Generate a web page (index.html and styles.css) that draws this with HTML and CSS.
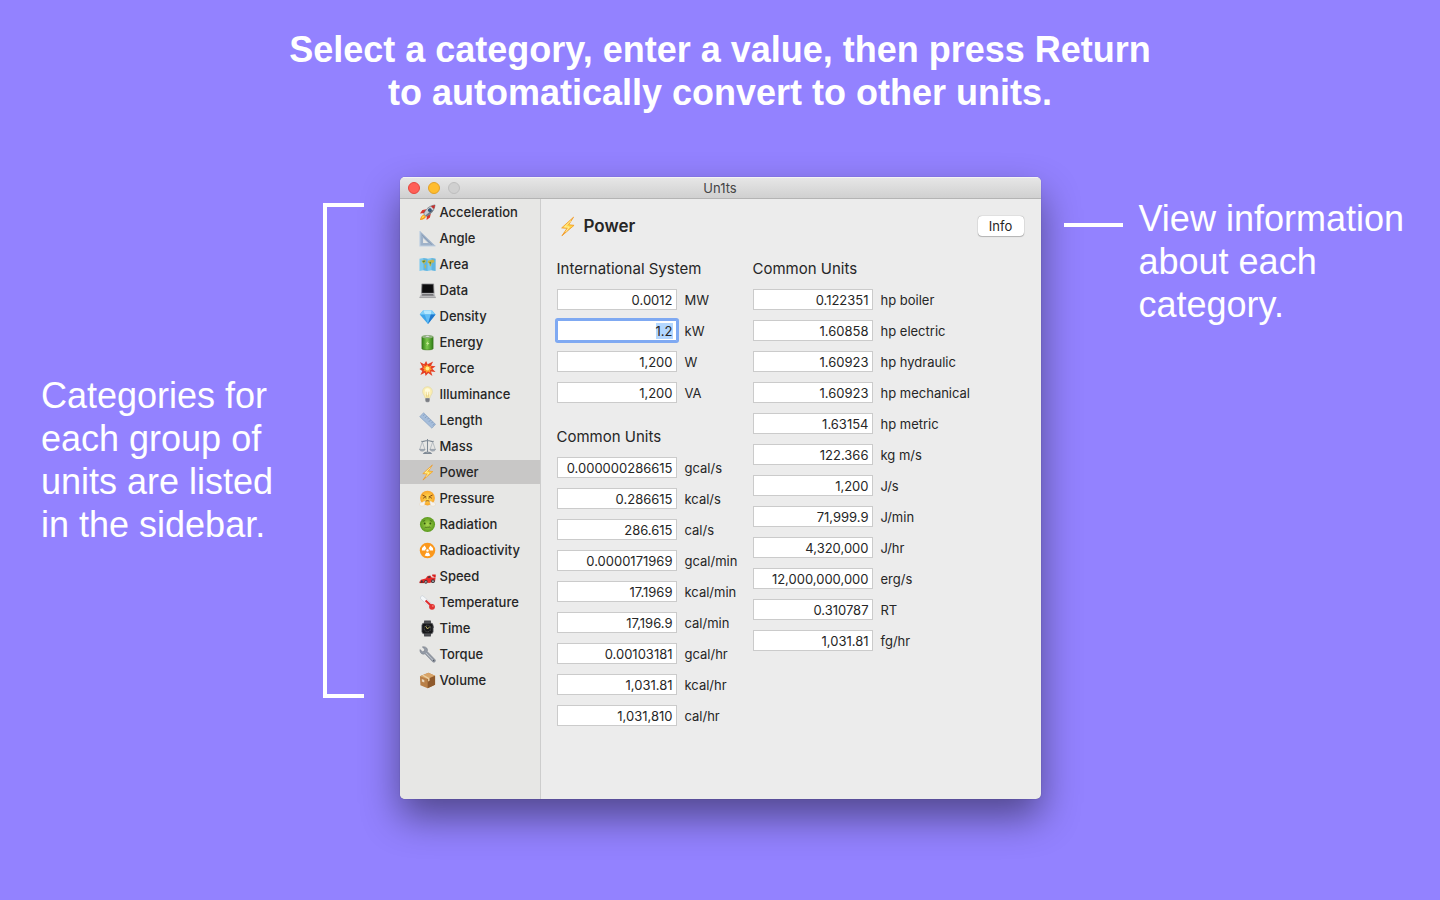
FILE: index.html
```html
<!DOCTYPE html>
<html lang="en">
<head>
<meta charset="utf-8">
<title>Un1ts</title>
<meta name="viewport" content="width=device-width, initial-scale=1">
<link rel="stylesheet" href="styles.css">
</head>
<body>
<svg class="defs" aria-hidden="true">
  <defs>
    <linearGradient id="g-bolt" x1="0" y1="0" x2="0" y2="1"><stop offset="0" stop-color="#ffb52e"/><stop offset=".5" stop-color="#ffd84a"/><stop offset="1" stop-color="#f7931e"/></linearGradient>
    <radialGradient id="g-green"><stop offset="0" stop-color="#a9d64e"/><stop offset="1" stop-color="#5b9a1e"/></radialGradient>
    <radialGradient id="g-face"><stop offset="0" stop-color="#ffdf55"/><stop offset="1" stop-color="#f9a52b"/></radialGradient>
    <linearGradient id="g-can"><stop offset="0" stop-color="#2f7d16"/><stop offset=".45" stop-color="#7cc94b"/><stop offset="1" stop-color="#2f7d16"/></linearGradient>
  </defs>
  <symbol id="i-bolt" viewBox="0 0 18 18"><path d="M14.2 1 4 10.2l4.600.4L4.200 17 14.600 8l-4.600-.5z" fill="url(#g-bolt)" stroke="#f09a26" stroke-width=".7" stroke-linejoin="round"/><path d="m12 4-5.500 5.300 4 .2L7.400 13.600" fill="none" stroke="#fff3a8" stroke-width=".8"/></symbol>
  <symbol id="i-rocket" viewBox="0 0 18 18"><path d="M1 17c.4-3 1.600-5 4-6l2.500 2.500C6.500 15.600 4.500 16.800 1 17z" fill="#f7941d"/><path d="M2.500 15.500c.3-1.600 1-2.700 2.500-3.400l1 1c-.8 1.500-2 2.200-3.500 2.400z" fill="#ffe04a"/><path d="M8 5.500 3.600 6.400 1 10l4.500-.4zM12.500 10l-.9 4.400L8 17l.4-4.500z" fill="#d9362c"/><path d="M5 10.500C7 5.500 11 1.600 17 1c-.6 6-4.500 10-9.500 12z" fill="#c6ced6" stroke="#59636e" stroke-width=".6"/><path d="M12.600 2.400C14 1.600 15.400 1.200 17 1c-.2 1.600-.6 3-1.400 4.400z" fill="#c52e2a"/><path d="m7 12 6.500-5.500L15.400 6C14 9 11 11.600 7.500 13z" fill="#727b86"/><circle cx="11.500" cy="6.500" r="1.700" fill="#2e5e94" stroke="#39414a" stroke-width=".6"/></symbol>
  <symbol id="i-angle" viewBox="0 0 18 18"><path d="M1 1v16h16.500zm3.300 7.500 5.500 5.300H4.300z" fill="#9fb2c9" fill-rule="evenodd"/><path d="M1 1v16h16.500" fill="none" stroke="#bfd0e2" stroke-width="1.200"/><path d="m3 5 10.500 10.400" stroke="#7f93ac" stroke-width=".8"/></symbol>
  <symbol id="i-map" viewBox="0 0 18 18"><path d="m.5 3 4.200-1L9 3l4.300-1 4.200 1v13l-4.200-1L9 16l-4.300-1-4.200 1z" fill="#7cc9ee"/><path d="M4.700 2v13L9 16V3zM13.300 2v13l4.200 1V3z" fill="#4fa6d6" opacity=".6"/><path d="m2.500 5 4-1 1.200 1.500L6 7.500l-.5 1-1.500-1zM6 9l1.700 1-1 3.500-.8-1zM9.500 5l5.500-1.200 1.500 1.700-1.500 2-1.500-.5L12.500 11l-1.200-.6-.6-2.600-1.500-.6z" fill="#c9b548"/><path d="m3.500 5.200 2.500-.5.300 1.500-1.800.8zM10.800 6.500l2-.5-.6 3.200z" fill="#4f8a3d"/></symbol>
  <symbol id="i-laptop" viewBox="0 0 18 18"><path d="M3 2h12.500l.5 10H2.500z" fill="#2e2e30" stroke="#8b8b8e" stroke-width=".7"/><path d="m4 3 10.500.1.300 7.900H3.700z" fill="#0c0c0d"/><path d="M2.500 12h13.600l1.700 4.200H.5z" fill="#b9b9bb"/><path d="M3.500 12.600h11.400l.8 1.900H2.800z" fill="#77777a"/><path d="M.5 16.200h17.300v.8H.5z" fill="#8b8b8e"/></symbol>
  <symbol id="i-gem" viewBox="0 0 18 18"><path d="M4.500 2.500h9L17.500 7 9.500 17 .8 7z" fill="#3da4ea"/><path d="M4.500 2.500 6 7H.8zM13.500 2.500 12.500 7h5z" fill="#7fd0fa"/><path d="M4.500 2.500h9l-1 4.500H6z" fill="#b4e7ff"/><path d="M6 7h6.500l-3 10z" fill="#61bdf6"/><path d="M12.500 7h5l-8 10z" fill="#2077cc"/></symbol>
  <symbol id="i-battery" viewBox="0 0 18 18"><path d="M3 3c0-1.600 12-1.600 12 0v12.500c0 1.800-12 1.800-12 0z" fill="url(#g-can)" stroke="#39701f" stroke-width=".5"/><ellipse cx="9" cy="3" rx="5.800" ry="1.600" fill="#8fb37c"/><ellipse cx="9" cy="2.400" rx="2.200" ry=".9" fill="#e6e8e3" stroke="#70826a" stroke-width=".3"/><path d="m10.300 6.800-3 3.400 1.900.2L8 13l3-3.400-1.900-.3z" fill="#d4f0a0"/></symbol>
  <symbol id="i-boom" viewBox="0 0 18 18"><path d="m1 2 4.500 2.500L7.500 1l1.600 3.500L15 1.500 12.700 6l4.800.5L14 9.200l3.500 3.500-4.800-.5 1.500 4.800-4.400-3.200L7 17l-.8-3.600L1.500 16l2-4.300L.5 9.500l3.300-1.700z" fill="#e43e25"/><path d="m4 5 3 1.500L9 4.600l1 2.200 3.300-.8L12 8.500l2 1.300-2.300 1 .4 2.700-2.500-1.400-2 1.700-.6-2.300-2.400.3L5.700 10 4 8.500l2-.7z" fill="#ff9a2b"/><circle cx="9" cy="9" r="2" fill="#ffef87"/></symbol>
  <symbol id="i-bulb" viewBox="0 0 18 18"><path d="M9 .8c3.300 0 5.200 2.400 5.200 5.100 0 2.800-2.400 4.200-2.700 6.900h-5C6.200 10.100 3.800 8.700 3.800 5.900 3.800 3.200 5.700.8 9 .8z" fill="#fbeeb0" stroke="#ddd3a0" stroke-width=".6"/><ellipse cx="9" cy="6" rx="2.800" ry="3.500" fill="#fffbdc"/><path d="m7.500 6 .8 6m2.200-6-.8 6" stroke="#d8b65a" stroke-width=".5"/><path d="M6.800 12.800h4.400v3.300L10 17.300H8l-1.200-1.200z" fill="#8d9096"/><path d="M6.800 14.200h4.400M7 15.700h4" stroke="#55585e" stroke-width=".5"/></symbol>
  <symbol id="i-ruler" viewBox="0 0 18 18"><path d="M4.800.8 17.500 13l-3.800 4.200L.8 5z" fill="#a5bdda" stroke="#7e9abd" stroke-width=".6"/><path d="m5.800 2.500-1.300 1.500M8 4.600 6.200 6.500m4-.2L9 7.700m3.300.7-1.900 2m4.100 0-1.300 1.400m3.200.6-1.700 1.900" stroke="#6d87a8" stroke-width=".6"/></symbol>
  <symbol id="i-scale" viewBox="0 0 18 18"><path d="M9 1v14M2.500 3.500C5 4.300 7 2.300 9 2.700c2-.4 4 1.600 6.500.8M5 16.300c1-1.800 7-1.800 8 0z" fill="none" stroke="#7e8994" stroke-width="1.100"/><path d="m3.500 4-2.700 8m2.700-8 2.700 8M14.500 4l-2.700 8m2.700-8 2.700 8" stroke="#929ca6" stroke-width=".6"/><path d="M.5 12h6c-.5 2.600-5.500 2.600-6 0zM11.500 12h6c-.5 2.600-5.500 2.600-6 0z" fill="#a6b0ba" stroke="#6f7a85" stroke-width=".4"/></symbol>
  <symbol id="i-huff" viewBox="0 0 18 18"><circle cx="9" cy="8.500" r="7.800" fill="url(#g-face)"/><path d="M4 5.500 7.500 7.300M14 5.500l-3.500 1.800" stroke="#7a4310" stroke-width="1" stroke-linecap="round"/><path d="M4.500 8.700c1-1 2-1 3 0m3 0c1-1 2-1 3 0M6.700 12.200c1.500-1.300 3-1.300 4.600 0" fill="none" stroke="#7a4310" stroke-width=".9" stroke-linecap="round"/><path d="M7 11.700c-2.500 0-3 1.500-4.200 1.500-1.500 0-2.800 1.200-2.200 2.600.7 1.600 4 1.800 5 .4.900-1.200.2-2.500 1.400-4.500zM11 11.700c2.500 0 3 1.500 4.200 1.500 1.500 0 2.800 1.200 2.200 2.600-.7 1.600-4 1.800-5 .4-.9-1.200-.2-2.500-1.400-4.500z" fill="#f6f3ee" stroke="#d9cbb6" stroke-width=".4"/></symbol>
  <symbol id="i-sick" viewBox="0 0 18 18"><circle cx="9" cy="9" r="8" fill="url(#g-green)"/><path d="M4 5.500c1 0 1.800-.3 2.600-1M14 5.500c-1 0-1.800-.3-2.600-1M6 12.500c1-1.200 1.500.3 2.200-.5s1 .8 1.800 0 1.200-.7 2 .5" fill="none" stroke="#34550d" stroke-width=".7"/><circle cx="6" cy="8" r="1" fill="#34550d"/><circle cx="12" cy="8" r="1" fill="#34550d"/></symbol>
  <symbol id="i-radio" viewBox="0 0 18 18"><circle cx="9" cy="9" r="8.200" fill="#fb981c"/><circle cx="9" cy="9" r="1.300" fill="#fff"/><path d="M10.200 11.100 12 14.200a6 6 0 0 1-6 0l1.800-3.100a2.400 2.400 0 0 0 2.400 0zM6.600 9H3a6 6 0 0 1 3-5.200l1.800 3.100A2.400 2.400 0 0 0 6.600 9zM11.400 9H15a6 6 0 0 0-3-5.200l-1.800 3.100A2.400 2.400 0 0 1 11.400 9z" fill="#fff"/></symbol>
  <symbol id="i-race" viewBox="0 0 18 18"><path d="M14 7h3.700v3h-2l-.5-1.200H14z" fill="#d9221f"/><path d="M.6 14.500 2 12.500l5-1.500 2-2.500 3-.5 1.500 2 4 .5-.5 3.500-6 2z" fill="#e62a28"/><path d="m9 10.300 1.200-1.600h1.500l.5 1.600z" fill="#363b44"/><path d="M.5 14.500h5v1.500h-5z" fill="#b21a17"/><ellipse cx="7.300" cy="14.600" rx="1.800" ry="2" fill="#38393d"/><circle cx="7.300" cy="14.600" r=".9" fill="#b5b6ba"/><ellipse cx="14.800" cy="13.900" rx="1.900" ry="2.100" fill="#38393d"/><circle cx="14.800" cy="13.900" r=".9" fill="#b5b6ba"/><ellipse cx="3" cy="14.300" rx=".9" ry="1.300" fill="#38393d"/></symbol>
  <symbol id="i-thermo" viewBox="0 0 18 18"><path d="M3.500 4 13.500 13" stroke="#c2cbd4" stroke-width="4.400" stroke-linecap="round"/><path d="M3.500 4 13.500 13" stroke="#f4f7f9" stroke-width="3.400" stroke-linecap="round"/><path d="m7 7 6.500 6" stroke="#df2e2e" stroke-width="2.200"/><circle cx="13.800" cy="13.600" r="3.100" fill="#e13331"/><circle cx="14.700" cy="12.700" r=".8" fill="#ff9c93"/></symbol>
  <symbol id="i-watch" viewBox="0 0 18 18"><path d="M5.500.5h7l.5 4H5zM5 13.500h8l-.5 4h-7z" fill="#47484c"/><rect x="3" y="3.300" width="12" height="11.400" rx="2.500" fill="#17181a" stroke="#717276" stroke-width=".7"/><circle cx="9" cy="9" r="3.500" fill="none" stroke="#77797d" stroke-width=".7" stroke-dasharray="1 .8"/><path d="M7 6.500 9 9.500l2.500-2.500" fill="none" stroke="#f0e27a" stroke-width=".8"/><path d="M15 6.500h.8v2H15z" fill="#55565a"/></symbol>
  <symbol id="i-wrench" viewBox="0 0 18 18"><path d="M1 3.800 3.700 6l2-.6.300-2L3.500 1c2.200-.8 4.800.3 5.400 2.400.2.900.1 1.700-.2 2.400l8.200 8.500c1.500 1.700-.7 3.900-2.500 2.400L6.300 8.300C3.800 9.600.6 7.500 1 3.800z" fill="#949ba6" stroke="#6b727d" stroke-width=".5"/><path d="m7.500 7.500 7.500 7.800" stroke="#c7ccd3" stroke-width=".9"/><circle cx="15.500" cy="15.400" r=".8" fill="#565c66"/></symbol>
  <symbol id="i-box" viewBox="0 0 18 18"><path d="M1 4.500 10 .8l7 3.200v9.500L9.200 17.300 1.500 14z" fill="#b98048"/><path d="M1 4.500 10 .8 17 4 9.200 7.500z" fill="#d8a468"/><path d="M9.200 7.500 17 4v9.500l-7.800 3.800z" fill="#8e592c"/><path d="m4.700 3 6.500 3.600v2.600l-1.600.8V7.300L3.400 3.600z" fill="#ecd1a3"/><path d="m3 7.500 2.600 1v2.600L3 10z" fill="#ead9bf"/></symbol>
</svg>

<h1 class="headline">Select a category, enter a value, then press Return<br>to automatically convert to other units.</h1>

<main class="stage">
  <aside class="note note-left">
    <p class="note-text">Categories for<br>each group of<br>units are listed<br>in the sidebar.</p>
    <div class="bracket"></div>
  </aside>

  <section class="window" aria-label="Un1ts">
    <header class="titlebar">
      <div class="lights">
        <button class="light close" aria-label="Close"></button>
        <button class="light minimize" aria-label="Minimize"></button>
        <button class="light zoom" aria-label="Zoom" disabled></button>
      </div>
      <span class="window-title">Un1ts</span>
    </header>
    <div class="window-body">
      <nav class="sidebar" aria-label="Categories">
        <a class="item" href="#acceleration"><svg class="icon"><use href="#i-rocket"/></svg>Acceleration</a>
        <a class="item" href="#angle"><svg class="icon"><use href="#i-angle"/></svg>Angle</a>
        <a class="item" href="#area"><svg class="icon"><use href="#i-map"/></svg>Area</a>
        <a class="item" href="#data"><svg class="icon"><use href="#i-laptop"/></svg>Data</a>
        <a class="item" href="#density"><svg class="icon"><use href="#i-gem"/></svg>Density</a>
        <a class="item" href="#energy"><svg class="icon"><use href="#i-battery"/></svg>Energy</a>
        <a class="item" href="#force"><svg class="icon"><use href="#i-boom"/></svg>Force</a>
        <a class="item" href="#illuminance"><svg class="icon"><use href="#i-bulb"/></svg>Illuminance</a>
        <a class="item" href="#length"><svg class="icon"><use href="#i-ruler"/></svg>Length</a>
        <a class="item" href="#mass"><svg class="icon"><use href="#i-scale"/></svg>Mass</a>
        <a class="item selected" href="#power" aria-current="page"><svg class="icon"><use href="#i-bolt"/></svg>Power</a>
        <a class="item" href="#pressure"><svg class="icon"><use href="#i-huff"/></svg>Pressure</a>
        <a class="item" href="#radiation"><svg class="icon"><use href="#i-sick"/></svg>Radiation</a>
        <a class="item" href="#radioactivity"><svg class="icon"><use href="#i-radio"/></svg>Radioactivity</a>
        <a class="item" href="#speed"><svg class="icon"><use href="#i-race"/></svg>Speed</a>
        <a class="item" href="#temperature"><svg class="icon"><use href="#i-thermo"/></svg>Temperature</a>
        <a class="item" href="#time"><svg class="icon"><use href="#i-watch"/></svg>Time</a>
        <a class="item" href="#torque"><svg class="icon"><use href="#i-wrench"/></svg>Torque</a>
        <a class="item" href="#volume"><svg class="icon"><use href="#i-box"/></svg>Volume</a>
      </nav>
      <div class="content">
        <div class="content-head">
          <h2 class="category"><svg class="category-icon"><use href="#i-bolt"/></svg>Power</h2>
          <button class="info">Info</button>
        </div>
        <div class="columns">
          <div class="column">
            <section class="group">
              <h3 class="group-title">International System</h3>
              <div class="fields">
                <div class="field"><input class="value" id="mw" value="0.0012"><label for="mw">MW</label></div>
                <div class="field"><input class="value" id="kw" value="1.2" autofocus><label for="kw">kW</label></div>
                <div class="field"><input class="value" id="w" value="1,200"><label for="w">W</label></div>
                <div class="field"><input class="value" id="va" value="1,200"><label for="va">VA</label></div>
              </div>
            </section>
            <section class="group">
              <h3 class="group-title">Common Units</h3>
              <div class="fields">
                <div class="field"><input class="value" id="gcals" value="0.000000286615"><label for="gcals">gcal/s</label></div>
                <div class="field"><input class="value" id="kcals" value="0.286615"><label for="kcals">kcal/s</label></div>
                <div class="field"><input class="value" id="cals" value="286.615"><label for="cals">cal/s</label></div>
                <div class="field"><input class="value" id="gcalmin" value="0.0000171969"><label for="gcalmin">gcal/min</label></div>
                <div class="field"><input class="value" id="kcalmin" value="17.1969"><label for="kcalmin">kcal/min</label></div>
                <div class="field"><input class="value" id="calmin" value="17,196.9"><label for="calmin">cal/min</label></div>
                <div class="field"><input class="value" id="gcalhr" value="0.00103181"><label for="gcalhr">gcal/hr</label></div>
                <div class="field"><input class="value" id="kcalhr" value="1,031.81"><label for="kcalhr">kcal/hr</label></div>
                <div class="field"><input class="value" id="calhr" value="1,031,810"><label for="calhr">cal/hr</label></div>
              </div>
            </section>
          </div>
          <div class="column">
            <section class="group">
              <h3 class="group-title">Common Units</h3>
              <div class="fields">
                <div class="field"><input class="value" id="hpb" value="0.122351"><label for="hpb">hp boiler</label></div>
                <div class="field"><input class="value" id="hpe" value="1.60858"><label for="hpe">hp electric</label></div>
                <div class="field"><input class="value" id="hph" value="1.60923"><label for="hph">hp hydraulic</label></div>
                <div class="field"><input class="value" id="hpm" value="1.60923"><label for="hpm">hp mechanical</label></div>
                <div class="field"><input class="value" id="hpmetric" value="1.63154"><label for="hpmetric">hp metric</label></div>
                <div class="field"><input class="value" id="kgms" value="122.366"><label for="kgms">kg m/s</label></div>
                <div class="field"><input class="value" id="js" value="1,200"><label for="js">J/s</label></div>
                <div class="field"><input class="value" id="jmin" value="71,999.9"><label for="jmin">J/min</label></div>
                <div class="field"><input class="value" id="jhr" value="4,320,000"><label for="jhr">J/hr</label></div>
                <div class="field"><input class="value" id="ergs" value="12,000,000,000"><label for="ergs">erg/s</label></div>
                <div class="field"><input class="value" id="rt" value="0.310787"><label for="rt">RT</label></div>
                <div class="field"><input class="value" id="fghr" value="1,031.81"><label for="fghr">fg/hr</label></div>
              </div>
            </section>
          </div>
        </div>
      </div>
    </div>
  </section>

  <aside class="note note-right">
    <div class="pointer"></div>
    <p class="note-text">View information<br>about each<br>category.</p>
  </aside>
</main>
<script src="app.js"></script>
</body>
</html>
```
FILE: styles.css
```css
* {
  box-sizing: border-box;
}

body {
  margin: 0;
  min-height: 100vh;
  padding: 28px 0;
  background: #9382ff;
  color: #fff;
  font-family: "Liberation Sans", Helvetica, Arial, sans-serif;
}

.defs {
  position: absolute;
  width: 0;
  height: 0;
}

.headline {
  margin: 0 0 63px;
  font-size: 36px;
  line-height: 43px;
  font-weight: 700;
  text-align: center;
}

.stage {
  display: grid;
  grid-template-columns: 1fr 641px 1fr;
  align-items: start;
}

.note {
  display: flex;
  white-space: nowrap;
}

.note-text {
  margin: 0;
  font-size: 36px;
  line-height: 43px;
}

.note-left {
  justify-content: space-between;
  padding: 26px 36px 0 41px;
}

.note-left .note-text {
  padding-top: 171px;
}

.bracket {
  width: 41px;
  height: 495px;
  border: 4px solid #fff;
  border-right: 0;
}

.note-right {
  gap: 16px;
  padding: 20px 0 0 23px;
}

.pointer {
  width: 59px;
  height: 4px;
  margin-top: 26px;
  background: #fff;
}

.window {
  overflow: hidden;
  border-radius: 5px;
  background: #ececec;
  color: #262626;
  font-family: Inter, "Noto Sans", sans-serif;
  font-size: 13px;
  line-height: 16px;
  box-shadow: 0 0 1px rgba(0, 0, 0, 0.4), 0 18px 38px rgba(0, 0, 0, 0.45);
}

.titlebar {
  display: grid;
  grid-template-columns: 1fr auto 1fr;
  align-items: center;
  height: 22px;
  padding: 0 8px;
  border-top: 1px solid #f4f4f4;
  border-bottom: 1px solid #b4b4b4;
  background: linear-gradient(#e6e6e6, #d0d0d0);
}

.lights {
  display: flex;
  gap: 8px;
}

.light {
  width: 12px;
  height: 12px;
  padding: 0;
  border: 1px solid;
  border-radius: 50%;
}

.close {
  border-color: #e2463f;
  background: #ff5f57;
}

.minimize {
  border-color: #e0a028;
  background: #ffbd2e;
}

.zoom {
  border-color: #bebebe;
  background: #d0d0d0;
}

.window-title {
  color: #444;
}

.window-body {
  display: grid;
  grid-template-columns: 141px 1fr;
  min-height: 600px;
}

.sidebar {
  display: flex;
  flex-direction: column;
  gap: 2px;
  padding-top: 1px;
  border-right: 1px solid #cdcdcd;
  background: #e7e7e5;
}

.item {
  display: flex;
  align-items: center;
  gap: 4px;
  height: 24px;
  padding-left: 19px;
  color: #262626;
  font-weight: 500;
  text-decoration: none;
}

.item.selected {
  background: #c8c7c6;
}

.icon {
  width: 17px;
  height: 17px;
}

.content {
  padding: 16px;
}

.content-head {
  display: flex;
  align-items: center;
  justify-content: space-between;
  height: 22px;
  margin-bottom: 23px;
}

.category {
  display: flex;
  align-items: center;
  gap: 6px;
  margin: 0;
  font-size: 17px;
  line-height: 22px;
  font-weight: 600;
}

.category-icon {
  width: 21px;
  height: 21px;
}

.info {
  width: 46px;
  height: 20px;
  margin-right: 1px;
  padding: 0;
  border: 0;
  border-radius: 4px;
  background: #fff;
  color: #262626;
  font: inherit;
  box-shadow: 0 0 1px rgba(0, 0, 0, 0.5), 0 1px 1px rgba(0, 0, 0, 0.2);
}

.columns {
  display: grid;
  grid-template-columns: 180px 1fr;
  gap: 16px;
}

.column {
  display: flex;
  flex-direction: column;
  gap: 25px;
}

.group-title {
  margin: 0 0 11px;
  font-size: 15px;
  line-height: 18px;
  font-weight: 400;
}

.fields {
  display: flex;
  flex-direction: column;
  gap: 10px;
}

.field {
  display: flex;
  align-items: center;
  gap: 8px;
  white-space: nowrap;
}

.value {
  width: 120px;
  height: 21px;
  padding: 0 3px;
  border: 1px solid #cbcbcb;
  border-radius: 0;
  outline: 0;
  background: #fff;
  color: #262626;
  font: inherit;
  text-align: right;
}

.value:focus {
  border-color: #7fa9f2;
  border-radius: 1px;
  box-shadow: 0 0 0 2px #7fa9f2;
}

.value::selection {
  background: #b3d7ff;
  color: #262626;
}
```
FILE: app.js
```js
const active = document.getElementById("kw");
active.focus();
active.select();
```
